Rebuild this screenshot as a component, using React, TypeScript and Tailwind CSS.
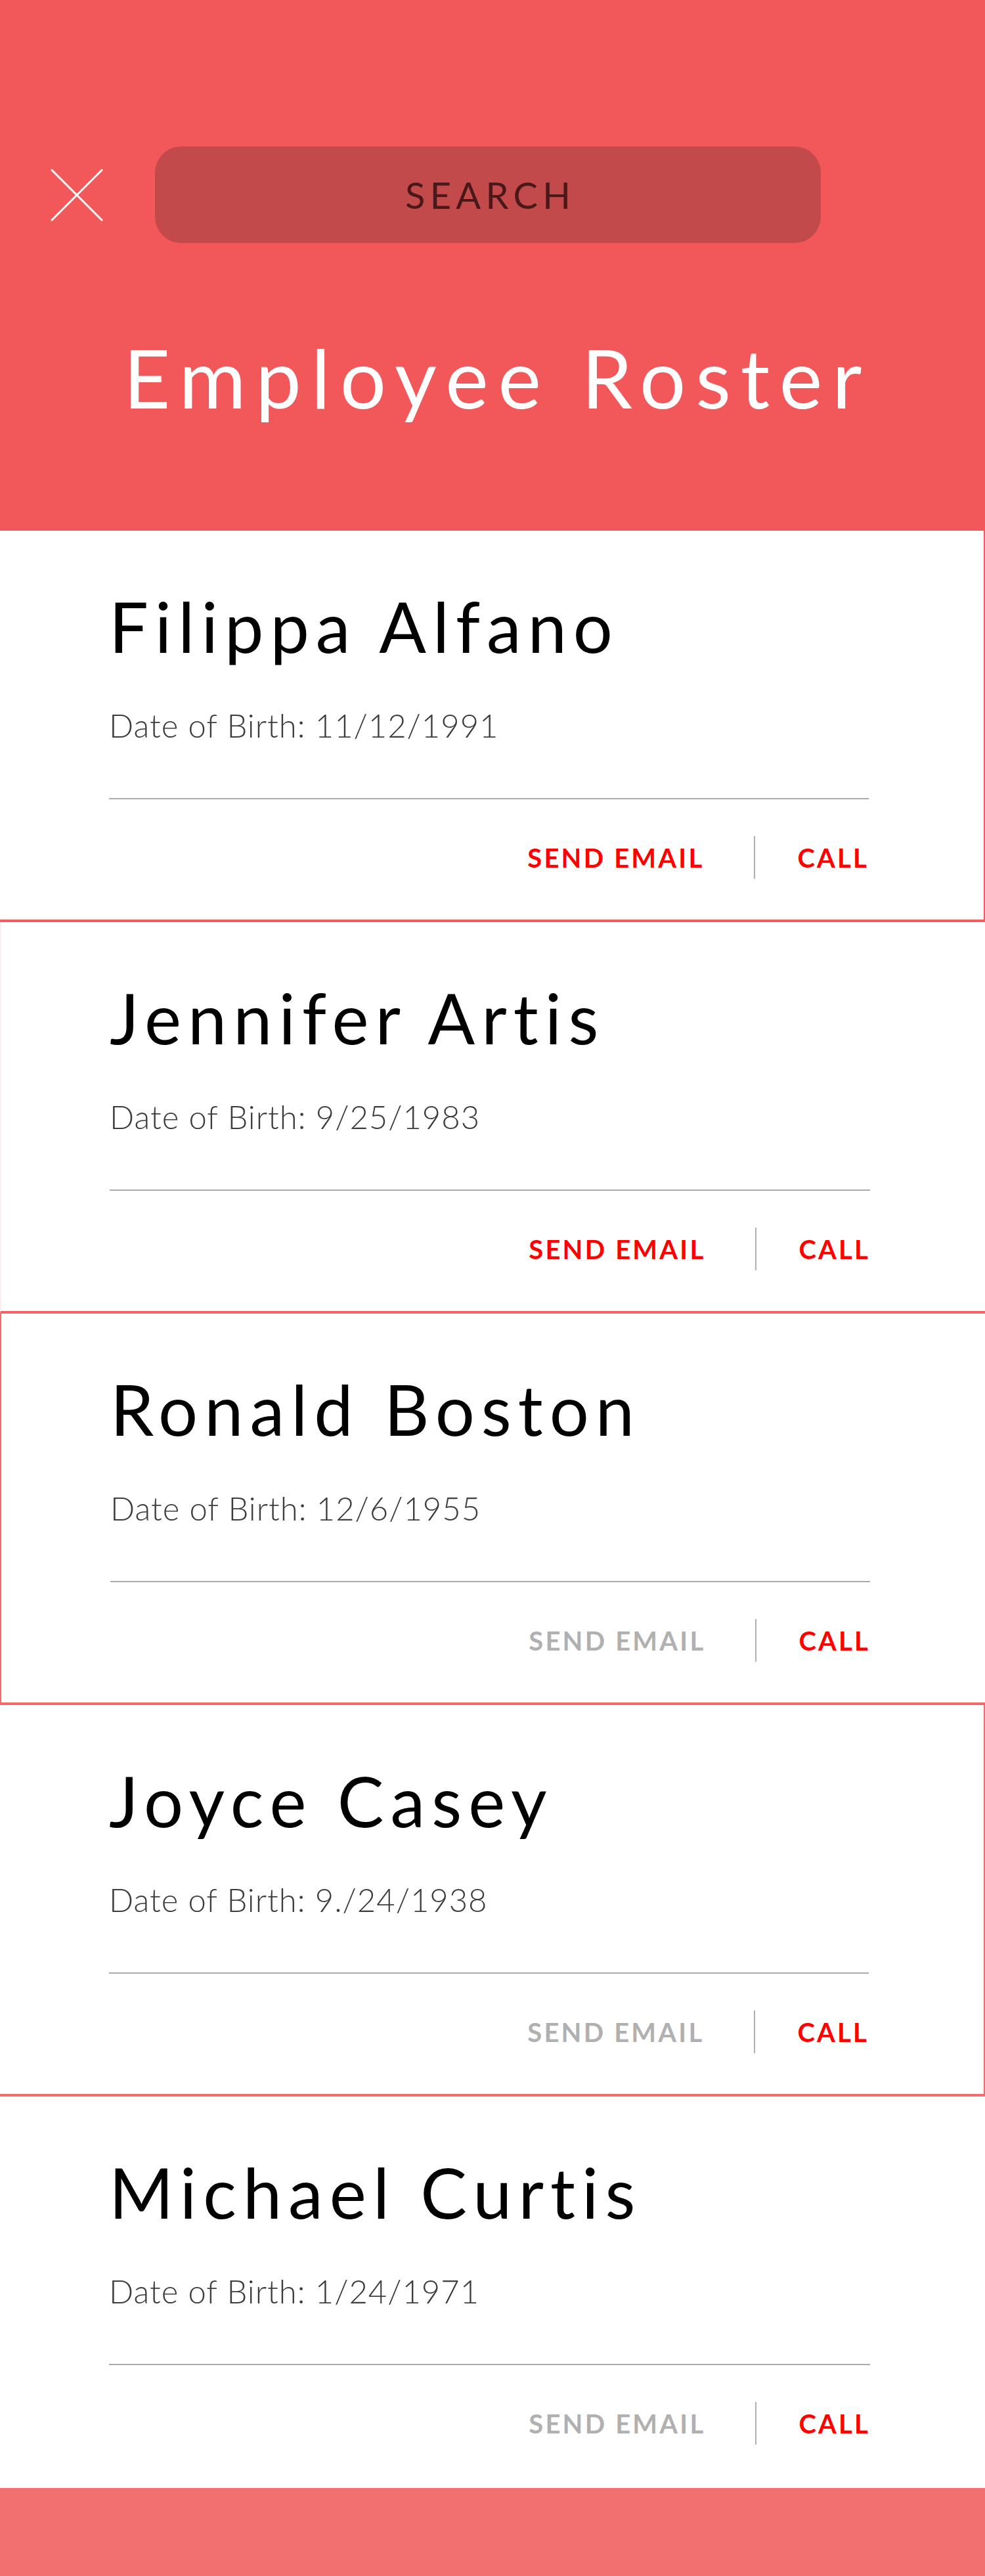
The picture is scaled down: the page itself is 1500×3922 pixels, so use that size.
import React from "react";

type Employee = {
  name: string;
  dob: string;
  canEmail: boolean;
  border: string;
};

const employees: Employee[] = [
  { name: "Filippa Alfano", dob: "11/12/1991", canEmail: true, border: "border-r-2 border-b-4 border-[#f25d5f]" },
  { name: "Jennifer Artis", dob: "9/25/1983", canEmail: true, border: "border-l border-l-[#fbe6e6] border-b-4 border-b-[#f36264]" },
  { name: "Ronald Boston", dob: "12/6/1955", canEmail: false, border: "border-l-2 border-b-4 border-[#f46a6b]" },
  { name: "Joyce Casey", dob: "9./24/1938", canEmail: false, border: "border-r-2 border-b-4 border-[#f46b6c]" },
  { name: "Michael Curtis", dob: "1/24/1971", canEmail: false, border: "" },
];

function CloseIcon() {
  return (
    <svg width="80" height="80" viewBox="0 0 80 80" className="shrink-0">
      <line x1="2" y1="2" x2="78" y2="78" stroke="#ffffff" strokeWidth="3" strokeLinecap="round" />
      <line x1="78" y1="2" x2="2" y2="78" stroke="#ffffff" strokeWidth="3" strokeLinecap="round" />
    </svg>
  );
}

function EmployeeCard({ emp }: { emp: Employee }) {
  return (
    <div className={`h-[596px] bg-white pt-[92px] pl-[166px] pr-[175px] ${emp.border}`}>
      <h2 className="text-[106px] leading-none font-normal text-black tracking-[0.095em] whitespace-nowrap">
        {emp.name}
      </h2>
      <p className="mt-[74px] text-[49px] leading-none font-light text-[#3c3c3c] tracking-[0.02em]">
        Date of Birth: {emp.dob}
      </p>
      <div className="mt-[86px] h-[2px] bg-[#ababab]" />
      <div className="mt-[56px] h-[65px] flex items-center justify-end">
        <button
          className={`text-[40px] leading-none font-bold tracking-[0.08em] ${
            emp.canEmail ? "text-[#ff0000]" : "text-[#b0b0b0]"
          }`}
        >
          SEND EMAIL
        </button>
        <div className="ml-[76px] mr-[64px] w-[2px] h-[65px] bg-[#b0b0b0]" />
        <button className="text-[40px] leading-none font-bold tracking-[0.08em] text-[#ff0000]">
          CALL
        </button>
      </div>
    </div>
  );
}

export default function App() {
  return (
    <div className="w-[1500px] bg-white font-['Lato','Liberation_Sans',sans-serif]">
      {/* header */}
      <header className="h-[808px] bg-[#f2575a] pt-[223px]">
        <div className="flex items-center pl-[77px]">
          <CloseIcon />
          <div className="ml-[79px] w-[1014px] h-[147px] rounded-[40px] bg-[#c24a4b] flex items-center justify-center">
            <span className="text-[56px] leading-none font-normal tracking-[0.13em] text-[#4a1819] pl-[0.13em]">
              SEARCH
            </span>
          </div>
        </div>
        <h1 className="mt-[142px] text-center text-[124px] leading-none font-normal text-white tracking-[0.12em] pl-[0.12em]">
          Employee Roster
        </h1>
      </header>

      {/* roster */}
      <div>
        {employees.map((emp, i) => (
          <EmployeeCard key={i} emp={emp} />
        ))}
      </div>

      <footer className="h-[138px] bg-[#f37071]" />
    </div>
  );
}
